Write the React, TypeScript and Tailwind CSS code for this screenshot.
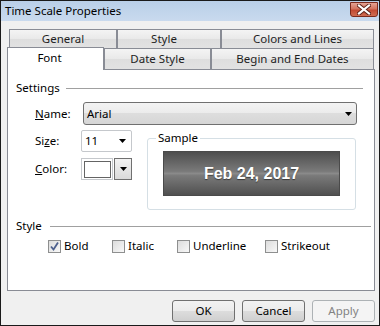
import React from 'react';

const Arrow = () => (
  <svg width="7" height="4" viewBox="0 0 7 4">
    <polygon points="0,0 7,0 3.5,4" fill="#000" />
  </svg>
);

const CloseGlyph = () => (
  <svg width="14" height="11" viewBox="0 0 14 11">
    <path d="M2 1.5 L12 9.5 M12 1.5 L2 9.5" stroke="#5a1f15" strokeWidth="4" strokeLinecap="square" />
    <path d="M2 1.5 L12 9.5 M12 1.5 L2 9.5" stroke="#ffffff" strokeWidth="2.2" strokeLinecap="square" />
  </svg>
);

const CheckBox = ({ label, checked, width }: { label: string; checked?: boolean; width: string }) => (
  <div className={`flex items-center gap-[3px] ${width}`}>
    <div className="w-[13px] h-[13px] border border-[#8e8f8f] bg-[linear-gradient(135deg,#dcdcdc,#f8f8f8)] flex items-center justify-center">
      {checked && (
        <svg width="11" height="11" viewBox="0 0 11 11">
          <path d="M2 5.5 L4.5 8.5 L9 1.5" stroke="#4c5f8d" strokeWidth="1.8" fill="none" />
        </svg>
      )}
    </div>
    <span className="text-[11.5px] leading-[14px]">{label}</span>
  </div>
);

const backTab = 'h-full flex items-center justify-center border-t border-x border-[#898c95] bg-[linear-gradient(to_bottom,#f4f4f4,#e9e9e9_50%,#dedede_50%,#e2e2e2)] text-[11.5px] text-[#1e1e1e]';

const btn = 'w-[63px] h-[22px] rounded-[3px] border flex items-center justify-center text-[11.5px]';

export default function App() {
  return (
    <div className="w-[380px] h-[326px] border border-[#1a1a1a] bg-[#f0f0f0] flex flex-col font-['Noto_Sans',sans-serif] text-black overflow-hidden">
      {/* title bar */}
      <div className="h-[20px] flex items-start justify-between bg-[linear-gradient(to_bottom,#b9cfe8,#c9daee)]">
        <span className="pl-[4px] text-[11.5px] leading-[20px] text-black">Time Scale Properties</span>
        <div className="mt-[1px] mr-[1px] w-[28px] h-[15px] rounded-b-[3px] border border-[#7a2a1c] bg-[linear-gradient(to_bottom,#e3a293,#d2735e_45%,#c24a33_55%,#cf6d52)] flex items-center justify-center">
          <CloseGlyph />
        </div>
      </div>

      <div className="flex flex-col pl-[6px] pr-[4px] pt-[8px]">
        {/* tabs row 1 */}
        <div className="flex h-[19px] pl-[2px]">
          <div className={`${backTab} w-[108px]`}>General</div>
          <div className={`${backTab} w-[104px] pr-[10px]`}>Style</div>
          <div className={`${backTab} w-[153px]`}>Colors and Lines</div>
        </div>
        {/* tabs row 2 */}
        <div className="flex items-end h-[21px]">
          <div className="relative z-10 -mb-px w-[97px] h-[23px] border-t border-x border-[#898c95] bg-white flex items-start justify-center pr-[12px] text-[11.5px] leading-[20px]">
            Font
          </div>
          <div className={`${backTab} w-[107px]`}>Date Style</div>
          <div className={`${backTab} w-[163px]`}>Begin and End Dates</div>
        </div>

        {/* panel */}
        <div className="h-[222px] border border-[#898c95] bg-white flex flex-col pl-[8px] text-[11.5px]">
          <div className="mt-[11px] flex items-center h-[14px]">
            <span className="leading-[14px]">Settings</span>
            <div className="flex-1 h-px bg-[#a0a0a0] ml-[6px] mr-[11px]" />
          </div>

          <div className="mt-[7px] flex items-center h-[23px] pl-[19px]">
            <span className="w-[48px]"><span className="underline">N</span>ame:</span>
            <div className="w-[274px] h-[23px] rounded-[3px] border border-[#707070] bg-[linear-gradient(to_bottom,#f3f3f3,#ebebeb_50%,#dddddd_50%,#d6d6d6)] flex items-center justify-between pl-[3px] pr-[4px]">
              <span>Arial</span>
              <Arrow />
            </div>
          </div>

          <div className="mt-[5px] flex items-start pl-[19px]">
            <div className="flex flex-col">
              <div className="flex items-center h-[22px]">
                <span className="w-[46px]">Si<span className="underline">z</span>e:</span>
                <div className="w-[51px] h-[22px] border border-[#c5c8cc] rounded-[2px] bg-white flex items-center justify-between pl-[3px] pr-[5px]">
                  <span>11</span>
                  <Arrow />
                </div>
              </div>
              <div className="mt-[6px] flex items-center h-[22px]">
                <span className="w-[46px]"><span className="underline">C</span>olor:</span>
                <div className="w-[51px] h-[22px] flex">
                  <div className="w-[32px] h-[22px] border border-[#c5c8cc] flex items-center justify-center bg-white">
                    <div className="w-[27px] h-[17px] border border-[#646464] bg-white" />
                  </div>
                  <div className="w-[18px] h-[22px] ml-px border border-[#707070] bg-[linear-gradient(to_bottom,#f3f3f3,#dadada)] flex items-center justify-center">
                    <Arrow />
                  </div>
                </div>
              </div>
            </div>

            <fieldset className="ml-[15px] w-[209px] border border-[#d5dfe5] rounded-[3px] pl-[15px] mt-[1px]">
              <legend className="-ml-[7px] px-[2px] leading-[14px]">Sample</legend>
              <div className="mt-[6px] mb-[13px] w-[177px] h-[45px] border border-[#4a4a4a] bg-[linear-gradient(to_bottom,#4e4e4e,#7a7a7a_45%,#8a8a8a_50%,#7a7a7a_55%,#505050)] flex items-center justify-center">
                <span className="font-['Liberation_Sans',Arial,sans-serif] font-bold text-[16px] text-white [text-shadow:0_1px_1px_rgba(0,0,0,0.5)]">
                  Feb 24, 2017
                </span>
              </div>
            </fieldset>
          </div>

          <div className="mt-[9px] flex items-center h-[14px]">
            <span className="leading-[14px]">Style</span>
            <div className="flex-1 h-px bg-[#a0a0a0] ml-[8px] mr-[3px]" />
          </div>

          <div className="mt-[6px] flex items-center pl-[32px]">
            <CheckBox label="Bold" checked width="w-[64px]" />
            <CheckBox label="Italic" width="w-[65px]" />
            <CheckBox label="Underline" width="w-[88px]" />
            <CheckBox label="Strikeout" width="w-[80px]" />
          </div>
        </div>

        {/* buttons */}
        <div className="mt-[9px] flex justify-end gap-[7px]">
          <div className={`${btn} border-[#707070] bg-[linear-gradient(to_bottom,#f2f2f2,#ebebeb_50%,#dddddd_50%,#cfcfcf)]`}>OK</div>
          <div className={`${btn} border-[#707070] bg-[linear-gradient(to_bottom,#f2f2f2,#ebebeb_50%,#dddddd_50%,#cfcfcf)]`}>Cancel</div>
          <div className={`${btn} border-[#adb2b5] bg-[#f4f4f4] text-[#838383]`}>Apply</div>
        </div>
      </div>
    </div>
  );
}
